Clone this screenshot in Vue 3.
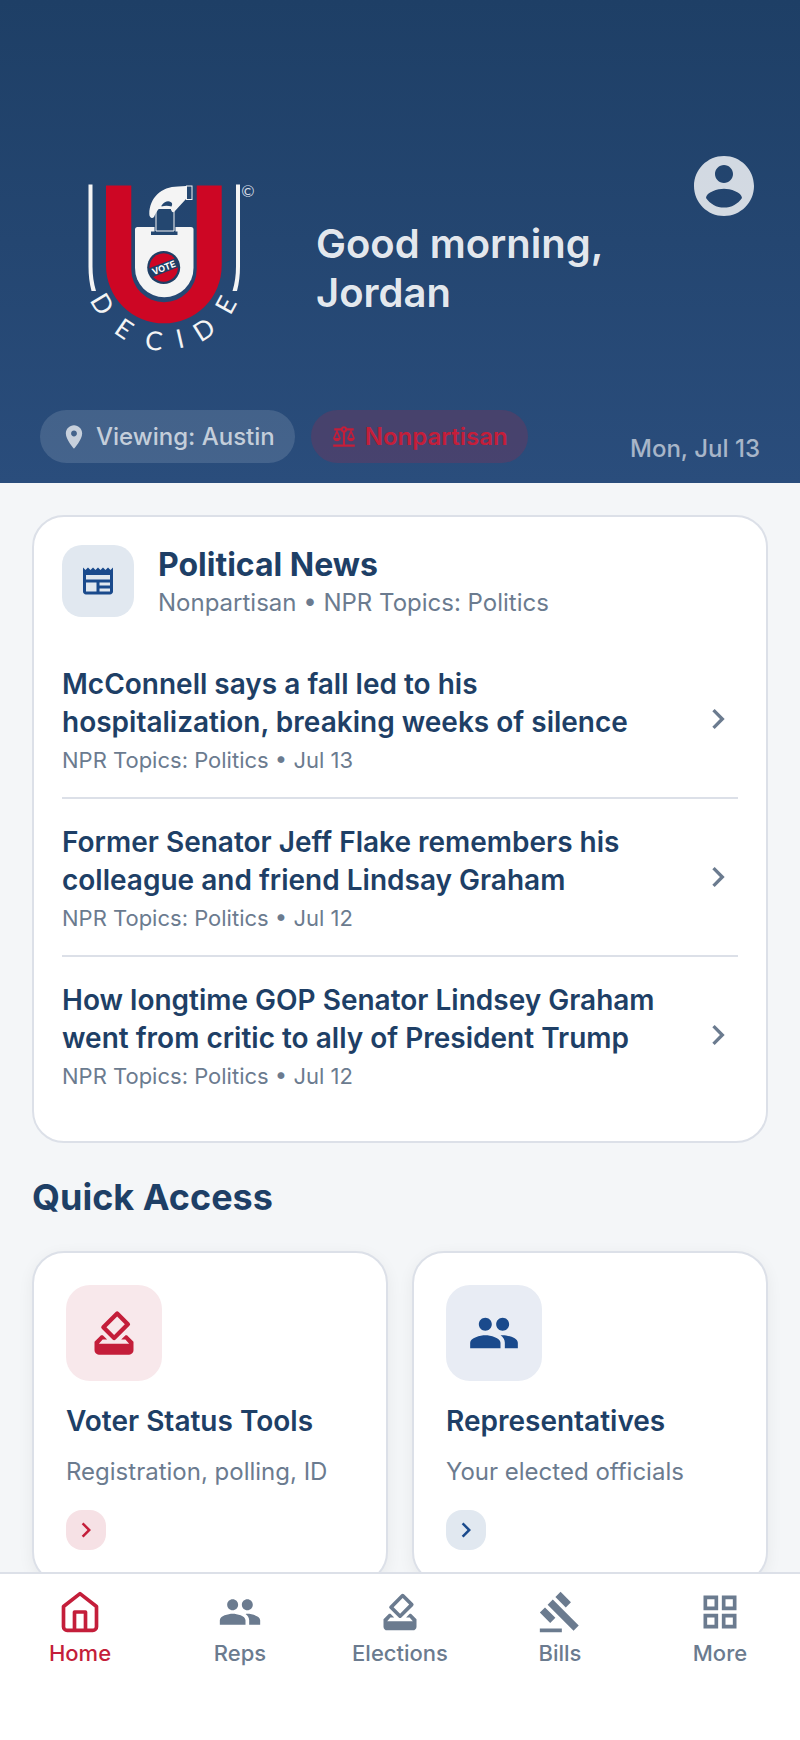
<template>
  <div class="screen">
    <header class="hero">
      <div class="hero-top">
        <svg class="logo" viewBox="0 0 248 236" role="img" aria-label="Decide">
          <g fill="#f4f4f4">
            <path d="M48.5 34.5h4v82q0 13 3.5 24.500h-4.500q-3-11-3-24.500z" />
            <path d="M196 34.500h4v82q0 13.500-3 24.500h-4.500q3.500-11.500 3.500-24.500z" />
          </g>
          <path
            fill="#cd0624"
            d="M66 35.500h25.300v84a32.700 32.700 0 0 0 65.400 0v-84h25v80a57.800 57.800 0 0 1-115.700 0z"
          />
          <path
            fill="#f4f4f4"
            d="M97.500 77h53.500q2.500 0 2.500 2.500v38.500a29.200 29.200 0 0 1-58.500 0V79.500q0-2.500 2.500-2.500z"
          />
          <!-- ballot going into the slot, held by the hand -->
          <rect x="111" y="81.500" width="26.500" height="3.500" fill="#244770" />
          <rect x="114.500" y="62" width="21" height="20" fill="#244770" />
          <path
            fill="#244770"
            stroke="#f4f4f4"
            d="M116 58.500h18v22.500h-18z"
          />
          <path
            fill="#f4f4f4"
            d="M109.300 64C109.500 48 121 36.500 138 36.500L146 36V49L134.500 61.500C133 63 131.500 62 130.500 58H120C117 60 115.500 64 114 67C112 69 109.300 67.500 109.300 64z"
          />
          <path d="M121.500 55.500q4-5 8-4t2 5q-5-1.500-10 0z" fill="#244770" />
          <rect
            x="146.500"
            y="36"
            width="5.500"
            height="13.500"
            fill="#244770"
            stroke="#f4f4f4"
          />
          <circle cx="123.700" cy="117.500" r="16.500" fill="#1f3f66" />
          <circle cx="123.700" cy="117.500" r="14.200" fill="#cd0624" />
          <g transform="rotate(-21 123.700 117.500)">
            <rect x="109" y="113" width="29.500" height="9.500" fill="#1f3f66" />
            <text
              x="123.700"
              y="121"
              font-size="9"
              font-weight="700"
              fill="#fff"
              text-anchor="middle"
            >
              VOTE
            </text>
          </g>
          <g class="decide">
            <text
              v-for="(l, i) in logoLetters"
              :key="i"
              y="9"
              :transform="`translate(${l.x} ${l.y}) rotate(${l.angle})`"
            >
              {{ l.char }}
            </text>
          </g>
          <text class="copy" x="208" y="47">©</text>
        </svg>
        <h1 class="greeting">Good morning, Jordan</h1>
        <button class="account" aria-label="Account">
          <svg viewBox="0 0 24 24"><path :d="icons.account" /></svg>
        </button>
      </div>
      <div class="hero-bottom">
        <button class="chip">
          <svg viewBox="0 0 24 24"><path :d="icons.place" /></svg>
          Viewing: Austin
        </button>
        <span class="chip chip-red">
          <svg viewBox="0 0 24 24"><path :d="icons.balance" /></svg>
          Nonpartisan
        </span>
        <time class="date">Mon, Jul 13</time>
      </div>
    </header>

    <main class="content">
      <section class="news">
        <div class="news-head">
          <span class="news-icon">
            <svg viewBox="0 0 24 24"><path :d="icons.newspaper" /></svg>
          </span>
          <div>
            <h2>Political News</h2>
            <p>Nonpartisan • NPR Topics: Politics</p>
          </div>
        </div>
        <a v-for="n in news" :key="n.title" href="#" class="news-item">
          <span class="news-text">
            <span class="news-title">{{ n.title }}</span>
            <span class="news-meta">{{ n.source }} • {{ n.date }}</span>
          </span>
          <svg viewBox="0 0 24 24"><path :d="icons.chevron" /></svg>
        </a>
      </section>

      <h2 class="section-title">Quick Access</h2>
      <div class="quick">
        <a
          v-for="q in quick"
          :key="q.title"
          href="#"
          class="quick-card"
          :class="q.tone"
        >
          <span class="quick-icon">
            <svg viewBox="0 0 24 24"><path :d="icons[q.icon]" /></svg>
          </span>
          <h3>{{ q.title }}</h3>
          <p>{{ q.text }}</p>
          <span class="quick-go">
            <svg viewBox="0 0 24 24"><path :d="icons.chevron" /></svg>
          </span>
        </a>
      </div>
    </main>

    <nav class="tabs">
      <button
        v-for="t in tabs"
        :key="t.label"
        :class="{ active: active === t.label }"
        @click="active = t.label"
      >
        <svg viewBox="0 0 24 24">
          <path :d="icons[t.icon]" :class="{ line: t.icon === 'home' }" />
        </svg>
        {{ t.label }}
      </button>
    </nav>
  </div>
</template>

<script setup>
import { ref } from "vue"

const active = ref("Home")

const icons = {
  account:
    "M12 2C6.48 2 2 6.48 2 12s4.48 10 10 10 10-4.48 10-10S17.52 2 12 2zm0 3c1.66 0 3 1.34 3 3s-1.34 3-3 3-3-1.34-3-3 1.34-3 3-3zm0 14.2c-2.5 0-4.71-1.28-6-3.22.03-1.99 4-3.08 6-3.08 1.99 0 5.97 1.09 6 3.08-1.29 1.94-3.5 3.22-6 3.22z",
  place:
    "M12 2C8.13 2 5 5.13 5 9c0 5.25 7 13 7 13s7-7.75 7-13c0-3.87-3.13-7-7-7zm0 9.5c-1.38 0-2.5-1.12-2.5-2.5s1.12-2.5 2.5-2.5 2.5 1.12 2.5 2.5-1.12 2.5-2.5 2.5z",
  balance:
    "M13 7.83c.85-.3 1.53-.98 1.83-1.83H18l-3 7c0 1.66 1.57 3 3.5 3s3.5-1.34 3.5-3l-3-7h2V4h-6.17c-.41-1.17-1.52-2-2.83-2s-2.42.83-2.83 2H3v2h2l-3 7c0 1.66 1.57 3 3.5 3S9 14.66 9 13L6 6h3.17c.3.85.98 1.53 1.83 1.83V19H2v2h20v-2h-9V7.83zM20.37 13h-3.74l1.87-4.36L20.37 13zm-13 0H3.63L5.5 8.64 7.37 13zM12 6c-.55 0-1-.45-1-1s.45-1 1-1 1 .45 1 1-.45 1-1 1z",
  newspaper:
    "M22 3l-1.67 1.67L18.67 3 17 4.67 15.33 3l-1.66 1.67L12 3l-1.67 1.67L8.67 3 7 4.67 5.33 3 3.67 4.67 2 3v16c0 1.1.9 2 2 2h16c1.1 0 2-.9 2-2V3zM11 19H4v-6h7v6zm9 0h-7v-2h7v2zm0-4h-7v-2h7v2zm0-4H4V8h16v3z",
  chevron: "M10 6L8.59 7.41 13.17 12l-4.58 4.59L10 18l6-6z",
  vote: "M18 13h-.68l-2 2h1.91L19 17H5l1.78-2h2.05l-2-2H6l-3 3v4c0 1.1.89 2 1.99 2H19c1.1 0 2-.89 2-2v-4l-3-3zm-1-5.05l-4.95 4.95-3.54-3.54 4.95-4.95L17 7.95zm-4.24-5.66L6.39 8.66a.996.996 0 0 0 0 1.41l4.95 4.95c.39.39 1.02.39 1.41 0l6.36-6.36a.996.996 0 0 0 0-1.41L14.16 2.3c-.38-.4-1.01-.4-1.4-.01z",
  people:
    "M16 11c1.66 0 2.99-1.34 2.99-3S17.66 5 16 5s-3 1.34-3 3 1.34 3 3 3zm-8 0c1.66 0 2.99-1.34 2.99-3S9.66 5 8 5 5 6.34 5 8s1.34 3 3 3zm0 2c-2.33 0-7 1.17-7 3.5V19h14v-2.5c0-2.33-4.67-3.5-7-3.5zm8 0c-.29 0-.62.02-.97.05 1.16.84 1.97 1.97 1.97 3.45V19h6v-2.5c0-2.33-4.67-3.5-7-3.5z",
  home: "M3 9l9-7 9 7v11a2 2 0 0 1-2 2H5a2 2 0 0 1-2-2zM9 22V12h6v10",
  gavel:
    "M1 21h12v2H1zM5.245 8.07l2.83-2.827 14.14 14.142-2.828 2.828zM12.317 1l5.657 5.656-2.83 2.83-5.654-5.66zM3.825 9.485l5.657 5.657-2.828 2.828-5.657-5.657z",
  grid: "M3 3v8h8V3H3zm6 6H5V5h4v4zm-6 4v8h8v-8H3zm6 6H5v-4h4v4zm4-16v8h8V3h-8zm6 6h-4V5h4v4zm-6 4v8h8v-8h-8zm6 6h-4v-4h4v4z",
}

// letters sit on an arc below the shield
const logoLetters = [
  { char: "D", x: 62, y: 154, angle: 59 },
  { char: "E", x: 84, y: 179, angle: 34 },
  { char: "C", x: 114, y: 191, angle: 5 },
  { char: "I", x: 140, y: 189, angle: -13 },
  { char: "D", x: 164, y: 180, angle: -32 },
  { char: "E", x: 186, y: 155, angle: -61 },
]

const news = [
  {
    title: "McConnell says a fall led to his hospitalization, breaking weeks of silence",
    source: "NPR Topics: Politics",
    date: "Jul 13",
  },
  {
    title: "Former Senator Jeff Flake remembers his colleague and friend Lindsay Graham",
    source: "NPR Topics: Politics",
    date: "Jul 12",
  },
  {
    title: "How longtime GOP Senator Lindsey Graham went from critic to ally of President Trump",
    source: "NPR Topics: Politics",
    date: "Jul 12",
  },
]

const quick = [
  {
    title: "Voter Status Tools",
    text: "Registration, polling, ID",
    icon: "vote",
    tone: "red",
  },
  {
    title: "Representatives",
    text: "Your elected officials",
    icon: "people",
    tone: "blue",
  },
]

const tabs = [
  { label: "Home", icon: "home" },
  { label: "Reps", icon: "people" },
  { label: "Elections", icon: "vote" },
  { label: "Bills", icon: "gavel" },
  { label: "More", icon: "grid" },
]
</script>

<style>
body {
  margin: 0;
  background: #f4f6f8;
}
</style>

<style scoped>
.screen {
  height: 100vh;
  display: flex;
  flex-direction: column;
  overflow: hidden;
  font-family: Inter, "Liberation Sans", sans-serif;
  color: #1e3f66;
}
h1,
h2,
h3,
p {
  margin: 0;
}
a {
  color: inherit;
  text-decoration: none;
}
button {
  border: 0;
  padding: 0;
  background: none;
  font-family: inherit;
  cursor: pointer;
}
svg {
  display: block;
  fill: currentColor;
  flex-shrink: 0;
}
.hero {
  flex-shrink: 0;
  padding: 150px 40px 20px;
  background: linear-gradient(#1e3f66, #2a4d7c);
}
.hero-top {
  display: flex;
  align-items: center;
}
.logo {
  width: 248px;
  height: 236px;
}
.decide text {
  font-family: Lato, sans-serif;
  font-size: 26px;
  font-weight: 400;
  fill: #f4f4f4;
  text-anchor: middle;
}
.copy {
  font-family: Lato, sans-serif;
  font-size: 16px;
  fill: #d8dee7;
  text-anchor: middle;
}
.greeting {
  flex: 1;
  margin-left: 28px;
  padding-right: 64px;
  font-size: 40px;
  line-height: 49px;
  font-weight: 600;
  color: rgba(255, 255, 255, 0.9);
}
.account {
  align-self: flex-start;
  color: rgba(255, 255, 255, 0.8);
}
.account svg {
  width: 72px;
  height: 72px;
}
.hero-bottom {
  display: flex;
  align-items: flex-end;
  gap: 16px;
  margin-top: 24px;
}
.chip {
  display: flex;
  align-items: center;
  gap: 8px;
  padding: 12px 20px;
  border-radius: 28px;
  background: rgba(255, 255, 255, 0.13);
  color: rgba(255, 255, 255, 0.7);
  font-size: 24px;
  line-height: 29px;
  font-weight: 500;
}
.chip svg {
  width: 28px;
  height: 28px;
}
.chip-red {
  background: rgba(196, 30, 58, 0.2);
  color: #c41e3a;
  font-weight: 600;
}
.chip-red svg {
  width: 26px;
  height: 26px;
}
.date {
  margin-left: auto;
  font-size: 24px;
  line-height: 29px;
  font-weight: 500;
  color: rgba(255, 255, 255, 0.6);
}
.content {
  flex: 1;
  min-height: 0;
  overflow: hidden;
  padding: 32px 32px 0;
}
.news {
  padding: 28px;
  border: 2px solid #dce0e8;
  border-radius: 32px;
  background: #fff;
}
.news-head {
  display: flex;
  align-items: center;
  gap: 24px;
  margin-bottom: 24px;
}
.news-icon {
  padding: 18px;
  border-radius: 20px;
  background: #e1e8f0;
  color: #1a4a8c;
}
.news-icon svg {
  width: 36px;
  height: 36px;
}
.news-head h2 {
  font-size: 32px;
  line-height: 39px;
  font-weight: 700;
}
.news-head p {
  margin-top: 4px;
  font-size: 24px;
  line-height: 29px;
  color: #6b7b8f;
}
.news-item {
  display: flex;
  align-items: center;
  padding: 24px 0;
}
.news-item + .news-item {
  border-top: 2px solid #dce0e8;
}
.news-item svg {
  width: 40px;
  height: 40px;
  color: #6b7b8f;
}
.news-text {
  flex: 1;
  padding-right: 32px;
}
.news-title {
  display: block;
  font-size: 28px;
  line-height: 38px;
  font-weight: 600;
}
.news-meta {
  display: block;
  margin-top: 6px;
  font-size: 22px;
  line-height: 26px;
  color: #6b7b8f;
}
.section-title {
  margin: 32px 0;
  font-size: 36px;
  line-height: 44px;
  font-weight: 700;
}
.quick {
  display: grid;
  grid-template-columns: 1fr 1fr;
  gap: 24px;
}
.quick-card {
  padding: 32px;
  border: 2px solid #dce0e8;
  border-radius: 32px;
  background: #fff;
  box-shadow: 0 4px 16px rgba(0, 0, 0, 0.06);
}
.quick-icon {
  display: flex;
  align-items: center;
  justify-content: center;
  width: 96px;
  height: 96px;
  border-radius: 24px;
}
.quick-icon svg {
  width: 52px;
  height: 52px;
}
.quick-card h3 {
  margin-top: 24px;
  font-size: 28px;
  line-height: 32px;
  font-weight: 600;
}
.quick-card p {
  margin-top: 20px;
  font-size: 24px;
  line-height: 29px;
  color: #6b7b8f;
}
.quick-go {
  display: flex;
  align-items: center;
  justify-content: center;
  width: 40px;
  height: 40px;
  margin-top: 24px;
  border-radius: 16px;
}
.quick-go svg {
  width: 30px;
  height: 30px;
}
.red .quick-icon,
.red .quick-go {
  color: #c41e3a;
  background: #f8e8eb;
}
.red .quick-go {
  background: #f6e1e5;
}
.blue .quick-icon,
.blue .quick-go {
  color: #1a4a8c;
  background: #e8ecf4;
}
.blue .quick-go {
  background: #e1e8f0;
}
.tabs {
  flex-shrink: 0;
  display: grid;
  grid-template-columns: repeat(5, 1fr);
  padding: 16px 0 72px;
  border-top: 2px solid #dce0e8;
  background: #fff;
}
.tabs button {
  display: flex;
  flex-direction: column;
  align-items: center;
  gap: 4px;
  font-size: 22px;
  line-height: 30px;
  font-weight: 500;
  color: #6b7b8f;
}
.tabs button.active {
  color: #c41e3a;
}
.tabs svg {
  width: 44px;
  height: 44px;
}
.line {
  fill: none;
  stroke: currentColor;
  stroke-width: 2;
  stroke-linecap: round;
  stroke-linejoin: round;
}
</style>
